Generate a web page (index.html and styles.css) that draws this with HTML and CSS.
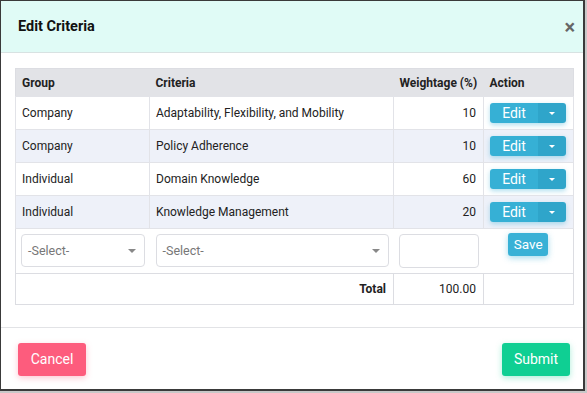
FILE: index.html
```html
<!DOCTYPE html>
<html lang="en">
<head>
    <meta charset="UTF-8">
    <meta name="viewport" content="width=device-width, initial-scale=1.0">
    <title>Edit Criteria</title>
    <link rel="stylesheet" href="styles.css">
</head>
<body>
    <div class="modal">
        <div class="modal-header">
            <h2>Edit Criteria</h2>
            <span class="close">&times;</span>
        </div>
        <div class="modal-body">
            <table class="criteria">
                <colgroup>
                    <col class="col-group">
                    <col class="col-criteria">
                    <col class="col-weight">
                    <col class="col-action">
                </colgroup>
                <thead>
                    <tr>
                        <th>Group</th>
                        <th>Criteria</th>
                        <th class="num">Weightage (%)</th>
                        <th>Action</th>
                    </tr>
                </thead>
                <tbody>
                    <tr class="item">
                        <td>Company</td>
                        <td>Adaptability, Flexibility, and Mobility</td>
                        <td class="num">10</td>
                        <td><div class="split-btn"><span class="main">Edit</span><span class="caret"></span></div></td>
                    </tr>
                    <tr class="item alt">
                        <td>Company</td>
                        <td>Policy Adherence</td>
                        <td class="num">10</td>
                        <td><div class="split-btn"><span class="main">Edit</span><span class="caret"></span></div></td>
                    </tr>
                    <tr class="item">
                        <td>Individual</td>
                        <td>Domain Knowledge</td>
                        <td class="num">60</td>
                        <td><div class="split-btn"><span class="main">Edit</span><span class="caret"></span></div></td>
                    </tr>
                    <tr class="item alt">
                        <td>Individual</td>
                        <td>Knowledge Management</td>
                        <td class="num">20</td>
                        <td><div class="split-btn"><span class="main">Edit</span><span class="caret"></span></div></td>
                    </tr>
                    <tr class="new-row">
                        <td><div class="select">-Select-<span class="arrow"></span></div></td>
                        <td><div class="select">-Select-<span class="arrow"></span></div></td>
                        <td><div class="field"></div></td>
                        <td class="center"><span class="save-btn">Save</span></td>
                    </tr>
                    <tr class="total">
                        <td colspan="2" class="num"><b>Total</b></td>
                        <td class="num">100.00</td>
                        <td></td>
                    </tr>
                </tbody>
            </table>
        </div>
        <div class="modal-footer">
            <span class="btn cancel">Cancel</span>
            <span class="btn submit">Submit</span>
        </div>
    </div>
</body>
</html>
```

FILE: styles.css
```css
body {
    margin: 0;
    font-family: Roboto, "Liberation Sans", Arial, sans-serif;
    background: #c8c8c8;
    color: #222;
}
.modal {
    width: 582px;
    height: 388px;
    background: white;
    border-top: 1px solid #3a3a3a;
    border-left: 1px solid #3a3a3a;
    border-right: 2px solid #3a3a3a;
    border-bottom: 2px solid #3a3a3a;
    display: flex;
    flex-direction: column;
}
.modal-header {
    height: 51px;
    background: #e0fbf6;
    border-bottom: 1px solid #d8e2e2;
    display: flex;
    align-items: center;
    justify-content: space-between;
    padding: 0 8px 0 17px;
}
.modal-header h2 {
    margin: 0;
    font-size: 14.5px;
    font-weight: bold;
    color: #111;
}
.close {
    font-size: 20px;
    font-weight: bold;
    color: #666;
    line-height: 1;
}
.modal-body {
    padding: 15px 10px 22px 14px;
    border-bottom: 1px solid #e2e3e6;
}
.criteria {
    width: 558px;
    border-collapse: collapse;
    font-size: 12px;
    table-layout: fixed;
    border: 1px solid #dcdde2;
}
.col-group { width: 134px; }
.col-criteria { width: 244px; }
.col-weight { width: 90px; }
.col-action { width: 90px; }
.criteria th {
    background: #e2e3e7;
    height: 27px;
    text-align: left;
    padding: 0 6px;
    font-weight: bold;
    color: #222;
    white-space: nowrap;
}
.criteria td {
    padding: 0 7px 0 6px;
    white-space: nowrap;
}
.criteria .num {
    text-align: right;
    padding-right: 7px;
}
.item td {
    height: 32px;
    border: 1px solid #e2e3e8;
}
.item.alt td {
    background: #eef1f9;
}
.split-btn {
    display: flex;
    width: 76px;
    height: 20px;
    border-radius: 3px;
    overflow: hidden;
    box-shadow: 0 2px 5px rgba(54, 176, 212, 0.4);
    color: white;
}
.split-btn .main {
    flex: 1;
    background: #36b0d5;
    text-align: center;
    line-height: 20px;
    font-size: 14px;
}
.split-btn .caret {
    width: 28px;
    background: #2fa5ca;
    display: flex;
    align-items: center;
    justify-content: center;
}
.split-btn .caret::after {
    content: "";
    border-left: 3px solid transparent;
    border-right: 3px solid transparent;
    border-top: 3px solid white;
}
.new-row td {
    height: 32px;
    padding: 5px 5px;
    vertical-align: top;
    border-top: 1px solid #e2e3e8;
}
.new-row td:nth-child(2) {
    padding-left: 6px;
}
.select {
    height: 31px;
    border: 1px solid #dcdde2;
    border-radius: 4px;
    display: flex;
    align-items: center;
    justify-content: space-between;
    padding: 0 8px 0 6px;
    color: #777;
    font-size: 12.5px;
}
.select .arrow {
    border-left: 4px solid transparent;
    border-right: 4px solid transparent;
    border-top: 4px solid #888;
}
.field {
    height: 32px;
    border: 1px solid #dcdde2;
    border-radius: 4px;
}
.center {
    text-align: center;
}
.new-row td.center {
    padding-top: 4px;
}
.save-btn {
    display: inline-block;
    width: 40px;
    height: 23px;
    line-height: 23px;
    background: #38b1d6;
    color: white;
    border-radius: 3px;
    font-size: 13.5px;
    box-shadow: 0 2px 6px rgba(54, 176, 212, 0.45);
}
.total td {
    height: 30px;
    border: 1px solid #dcdde2;
}
.modal-footer {
    flex: 1;
    display: flex;
    justify-content: space-between;
    align-items: flex-start;
    padding: 15px 13px 0 17px;
}
.btn {
    width: 68px;
    height: 33px;
    line-height: 33px;
    text-align: center;
    color: white;
    font-size: 14px;
    border-radius: 3px;
}
.cancel {
    background: #fd5c7d;
    box-shadow: 0 2px 6px rgba(253, 92, 125, 0.35);
}
.submit {
    background: #0fcf93;
    box-shadow: 0 2px 6px rgba(15, 207, 147, 0.35);
}
```
